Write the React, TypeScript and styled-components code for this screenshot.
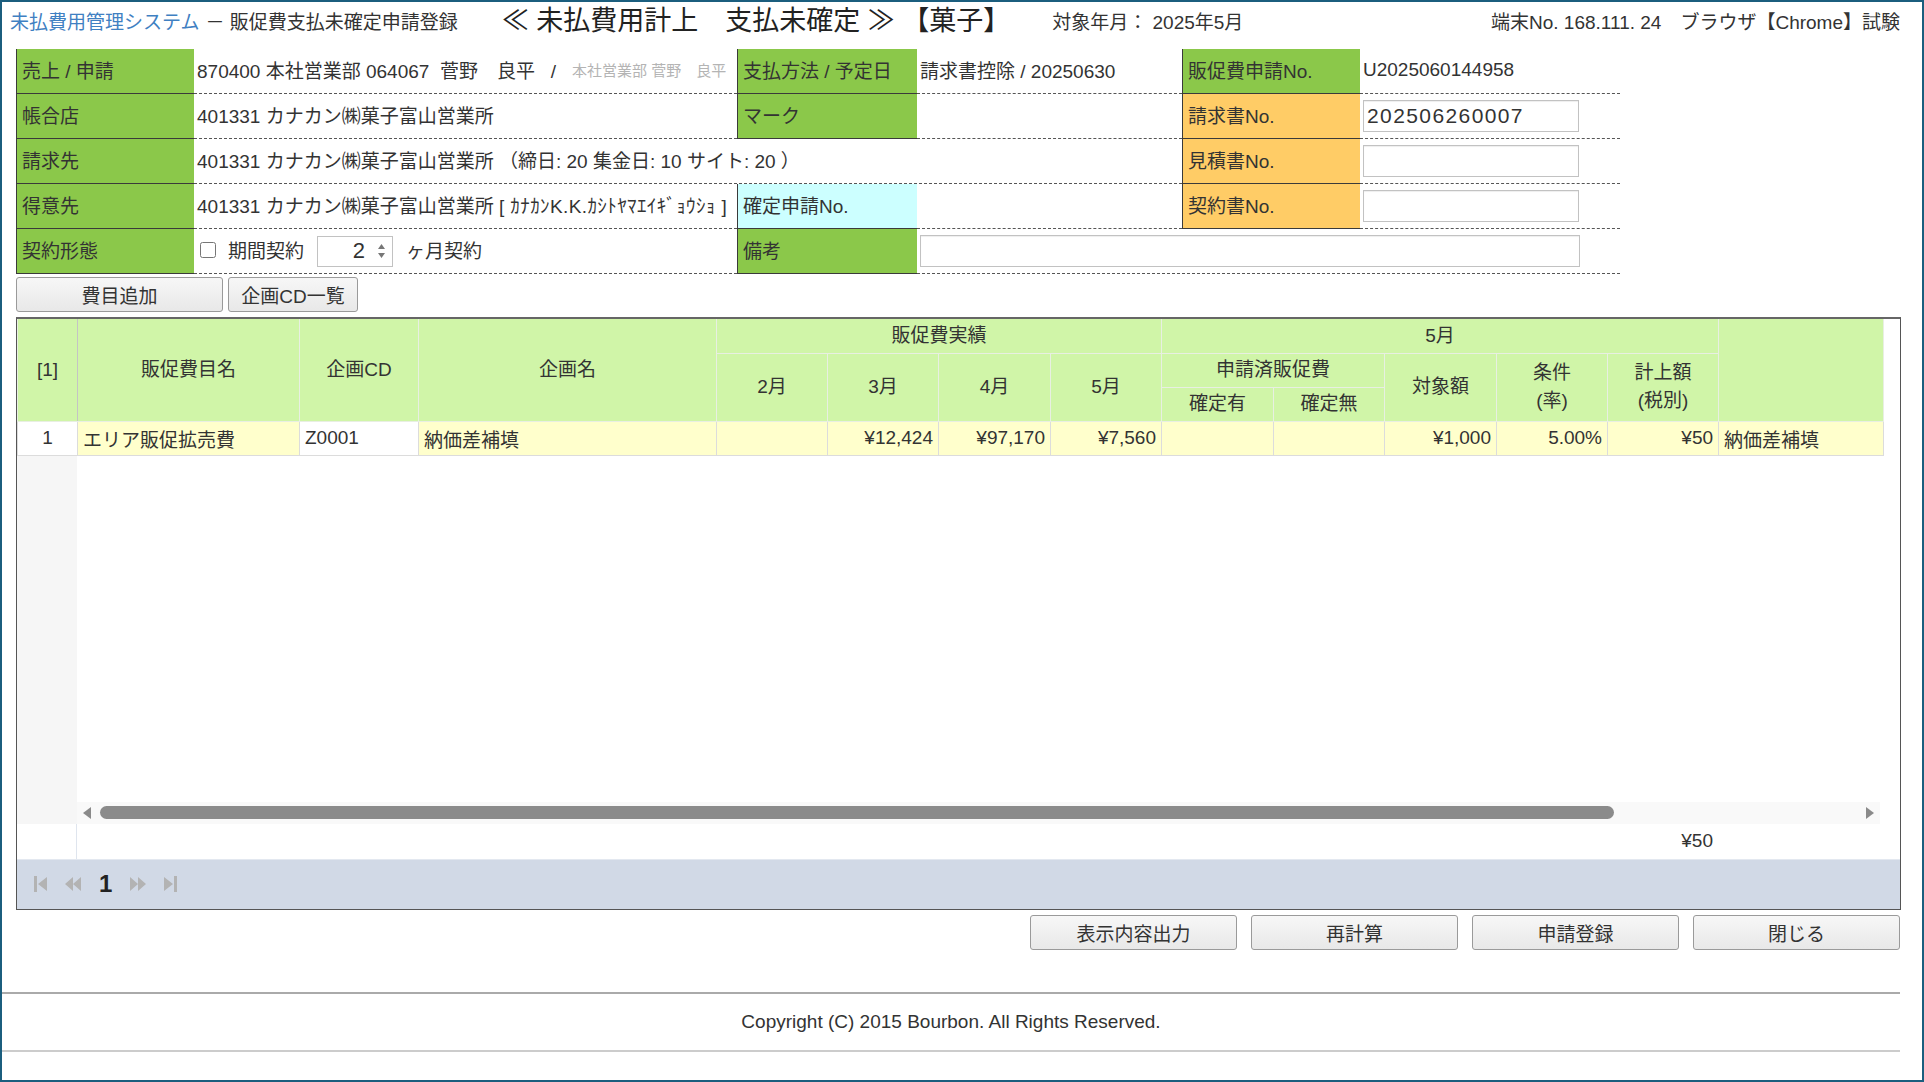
import styled, { createGlobalStyle } from 'styled-components';

const GlobalStyle = createGlobalStyle`
  html, body {
    margin: 0;
    padding: 0;
    background: #fff;
  }
  body {
    font-family: "Liberation Sans", "Noto Sans CJK JP", sans-serif;
    font-size: 19px;
    color: #333;
    overflow: hidden;
  }
  * {
    box-sizing: border-box;
  }
`;

const Frame = styled.div`
  width: 100vw;
  height: 100vh;
  border: 2px solid #1b5e7e;
  overflow: hidden;
`;

const Page = styled.div`
  width: 1898px;
  display: flex;
  flex-direction: column;
`;

const Header = styled.header`
  display: flex;
  align-items: center;
  height: 36px;
  padding-left: 8px;
  white-space: nowrap;
`;

const SystemName = styled.span`
  color: #3f80c2;
`;

const ScreenName = styled.span`
  margin-left: 6px;
`;

const Title = styled.span`
  margin-left: 44px;
  margin-top: -4px;
  font-size: 27px;
  color: #222;
`;

const TargetMonth = styled.span`
  margin-left: 42px;
`;

const Terminal = styled.span`
  margin-left: auto;
`;

const Content = styled.div`
  padding-left: 14px;
`;

const InfoGrid = styled.div`
  display: grid;
  grid-template-columns: 178px 543px 180px 265px 178px 260px;
  grid-auto-rows: 45px;
  width: 1604px;
  margin-top: 11px;
`;

const toneColors = {
  green: '#8bc84a',
  orange: '#ffcc66',
  cyan: '#ccffff',
};

const Label = styled.div<{ $tone: keyof typeof toneColors }>`
  display: flex;
  align-items: center;
  padding: 0 0 3px 5px;
  background: ${(p) => toneColors[p.$tone]};
  border-left: 1px solid #3a3a3a;
  border-bottom: 1px solid #3a3a3a;
  white-space: nowrap;
`;

const Value = styled.div<{ $span?: number }>`
  grid-column: span ${(p) => p.$span ?? 1};
  display: flex;
  align-items: center;
  padding: 0 0 3px 3px;
  border-bottom: 1px dashed #555;
  white-space: pre;
  overflow: hidden;
`;

const SubName = styled.span`
  margin-left: 16px;
  font-size: 15px;
  color: #b4b4b4;
`;

const Kana = styled.span`
  letter-spacing: 0.4px;
`;

const TextField = styled.input<{ $w: number }>`
  width: ${(p) => p.$w}px;
  height: 32px;
  margin-top: 3px;
  border: 1px solid #c2c2c2;
  box-shadow: inset 0 1px 1px rgba(0, 0, 0, 0.07);
  font-family: inherit;
  font-size: 21px;
  letter-spacing: 1.4px;
  color: #333;
  padding: 0 3px;
  background: #fff;
`;

const Check = styled.input`
  width: 16px;
  height: 16px;
  margin: 0 12px 0 3px;
`;

const SpinBox = styled.div`
  display: flex;
  align-items: center;
  justify-content: flex-end;
  gap: 12px;
  width: 76px;
  height: 31px;
  margin: 3px 13px 0;
  padding-right: 6px;
  border: 1px solid #c2c2c2;
  font-size: 22px;
`;

const ButtonRow = styled.div`
  display: flex;
  gap: 5px;
  margin-top: 3px;
`;

const Button = styled.button<{ $w: number }>`
  width: ${(p) => p.$w}px;
  height: 35px;
  padding: 0;
  border: 1px solid #9a9a9a;
  border-radius: 3px;
  background: linear-gradient(#f7f7f7, #e8e8e8);
  font: inherit;
  color: #333;
`;

const GridBox = styled.div`
  width: 1885px;
  margin-top: 5px;
  border: 1px solid #555;
  border-top: 2px solid #666;
`;

const Table = styled.table`
  table-layout: fixed;
  border-collapse: collapse;
  width: 1866px;
`;

const Th = styled.th<{ $sep?: boolean }>`
  height: 34px;
  padding: 0;
  background: #d0f5a8;
  border: 1px solid #e8efe2;
  border-top: none;
  ${(p) => (p.$sep ? 'border-right: 1px solid #c4c4c4;' : '')}
  font-weight: normal;
  text-align: center;
  vertical-align: middle;
  line-height: 28px;
  white-space: nowrap;
`;

const Td = styled.td<{ $tone?: 'yellow' | 'white'; $align?: 'left' | 'right' | 'center' }>`
  height: 34px;
  padding: 0 5px;
  background: ${(p) => (p.$tone === 'yellow' ? '#ffffcc' : '#fff')};
  border: 1px solid #dcdcdc;
  text-align: ${(p) => p.$align ?? 'left'};
  white-space: nowrap;
  overflow: hidden;
`;

const BodyArea = styled.div`
  display: flex;
  height: 368px;
`;

const Gutter = styled.div<{ $shade?: boolean }>`
  width: 60px;
  flex: none;
  background: ${(p) => (p.$shade ? '#f6f6f6' : '#fff')};
  border-right: 1px solid ${(p) => (p.$shade ? '#f6f6f6' : '#dfe5ee')};
`;

const BodyMain = styled.div`
  display: flex;
  flex-direction: column;
  width: 1806px;
`;

const Filler = styled.div`
  flex: 1;
`;

const ScrollTrack = styled.div`
  display: flex;
  align-items: center;
  height: 22px;
  width: 1803px;
  padding: 0 6px;
  background: #f9f9f9;
`;

const Thumb = styled.div<{ $w: number }>`
  width: ${(p) => p.$w}px;
  height: 13px;
  margin-left: 9px;
  border-radius: 7px;
  background: #8b8b8b;
`;

const TrackSpacer = styled.div`
  flex: 1;
`;

const TotalRow = styled.div`
  display: flex;
  height: 35px;
`;

const TotalAmount = styled.div`
  width: 1641px;
  padding-right: 5px;
  display: flex;
  align-items: center;
  justify-content: flex-end;
`;

const Pager = styled.div`
  display: flex;
  align-items: center;
  gap: 18px;
  height: 50px;
  padding-left: 17px;
  background: #d1d9e6;
  border-top: 1px solid #e3e8f0;
`;

const PageNo = styled.span`
  font-size: 24px;
  font-weight: bold;
  color: #222;
`;

const ActionBar = styled.div`
  display: flex;
  justify-content: flex-end;
  gap: 14px;
  width: 1884px;
  margin-top: 5px;
`;

const Footer = styled.footer`
  margin-top: 42px;
  height: 60px;
  display: flex;
  align-items: center;
  justify-content: center;
  border-top: 2px solid #aaa;
  border-bottom: 2px solid #ccc;
`;

const PagerIcon = ({ kind }: { kind: 'first' | 'prev' | 'next' | 'last' }) => {
  const paths = {
    first: 'M0 1h3v16H0z M13 2L4 9l9 7z',
    prev: 'M8 2L0 9l8 7z M16 2L8 9l8 7z',
    next: 'M0 2l8 7-8 7z M8 2l8 7-8 7z',
    last: 'M0 2l9 7-9 7z M10 1h3v16h-3z',
  };
  const w = kind === 'first' || kind === 'last' ? 13 : 16;
  return (
    <svg width={w} height={18} viewBox={`0 0 ${w} 18`}>
      <path d={paths[kind]} fill="#b3b3b3" />
    </svg>
  );
};

const Arrow = ({ dir }: { dir: 'left' | 'right' }) => (
  <svg width={8} height={12} viewBox="0 0 8 12">
    <path d={dir === 'left' ? 'M8 0L0 6l8 6z' : 'M0 0l8 6-8 6z'} fill="#8a8a8a" />
  </svg>
);

const SpinArrows = () => (
  <svg width={9} height={18} viewBox="0 0 9 18">
    <path d="M4.5 2L8 7H1z M1 11h7l-3.5 5z" fill="#777" />
  </svg>
);

const months = ['2月', '3月', '4月', '5月'];
const colWidths = [60, 222, 119, 298, 111, 111, 112, 111, 112, 111, 112, 111, 111, 165];

const row = {
  name: 'エリア販促拡売費',
  code: 'Z0001',
  plan: '納価差補填',
  results: ['', '¥12,424', '¥97,170', '¥7,560'],
  fixed: '',
  unfixed: '',
  target: '¥1,000',
  rate: '5.00%',
  amount: '¥50',
  note: '納価差補填',
};

const App = () => {
  return (
    <>
      <GlobalStyle />
      <Frame>
        <Page>
          <Header>
            <SystemName>未払費用管理システム</SystemName>
            <ScreenName>－ 販促費支払未確定申請登録</ScreenName>
            <Title>≪ 未払費用計上　支払未確定 ≫ 【菓子】</Title>
            <TargetMonth>対象年月： 2025年5月</TargetMonth>
            <Terminal>端末No. 168.111. 24　ブラウザ【Chrome】試験</Terminal>
          </Header>

          <Content>
            <InfoGrid>
              <Label $tone="green">売上 / 申請</Label>
              <Value>
                {'870400 本社営業部 064067  菅野　良平   /'}
                <SubName>本社営業部 菅野　良平</SubName>
              </Value>
              <Label $tone="green">支払方法 / 予定日</Label>
              <Value>請求書控除 / 20250630</Value>
              <Label $tone="green">販促費申請No.</Label>
              <Value>U2025060144958</Value>

              <Label $tone="green">帳合店</Label>
              <Value>401331 カナカン㈱菓子富山営業所</Value>
              <Label $tone="green">マーク</Label>
              <Value />
              <Label $tone="orange">請求書No.</Label>
              <Value>
                <TextField $w={216} defaultValue="202506260007" readOnly />
              </Value>

              <Label $tone="green">請求先</Label>
              <Value $span={3}>401331 カナカン㈱菓子富山営業所 （締日: 20 集金日: 10 サイト: 20 ）</Value>
              <Label $tone="orange">見積書No.</Label>
              <Value>
                <TextField $w={216} readOnly />
              </Value>

              <Label $tone="green">得意先</Label>
              <Value>
                401331 カナカン㈱菓子富山営業所 <Kana>[ ｶﾅｶﾝK.K.ｶｼﾄﾔﾏｴｲｷﾞｮｳｼｮ ]</Kana>
              </Value>
              <Label $tone="cyan">確定申請No.</Label>
              <Value />
              <Label $tone="orange">契約書No.</Label>
              <Value>
                <TextField $w={216} readOnly />
              </Value>

              <Label $tone="green">契約形態</Label>
              <Value>
                <Check type="checkbox" />
                期間契約
                <SpinBox>
                  2
                  <SpinArrows />
                </SpinBox>
                ヶ月契約
              </Value>
              <Label $tone="green">備考</Label>
              <Value $span={3}>
                <TextField $w={660} readOnly />
              </Value>
            </InfoGrid>

            <ButtonRow>
              <Button $w={207}>費目追加</Button>
              <Button $w={130}>企画CD一覧</Button>
            </ButtonRow>

            <GridBox>
              <Table>
                <colgroup>
                  {colWidths.map((w, i) => (
                    <col key={i} style={{ width: w }} />
                  ))}
                </colgroup>
                <thead>
                  <tr>
                    <Th rowSpan={3} $sep>[1]</Th>
                    <Th rowSpan={3}>販促費目名</Th>
                    <Th rowSpan={3}>企画CD</Th>
                    <Th rowSpan={3}>企画名</Th>
                    <Th colSpan={4}>販促費実績</Th>
                    <Th colSpan={5}>5月</Th>
                    <Th rowSpan={3} />
                  </tr>
                  <tr>
                    {months.map((m) => (
                      <Th key={m} rowSpan={2}>
                        {m}
                      </Th>
                    ))}
                    <Th colSpan={2}>申請済販促費</Th>
                    <Th rowSpan={2}>対象額</Th>
                    <Th rowSpan={2}>
                      条件
                      <br />
                      (率)
                    </Th>
                    <Th rowSpan={2}>
                      計上額
                      <br />
                      (税別)
                    </Th>
                  </tr>
                  <tr>
                    <Th>確定有</Th>
                    <Th>確定無</Th>
                  </tr>
                </thead>
                <tbody>
                  <tr>
                    <Td $align="center">1</Td>
                    <Td $tone="yellow">{row.name}</Td>
                    <Td>{row.code}</Td>
                    <Td $tone="yellow">{row.plan}</Td>
                    {row.results.map((v, i) => (
                      <Td key={i} $tone="yellow" $align="right">
                        {v}
                      </Td>
                    ))}
                    <Td $tone="yellow" $align="right">{row.fixed}</Td>
                    <Td $tone="yellow" $align="right">{row.unfixed}</Td>
                    <Td $tone="yellow" $align="right">{row.target}</Td>
                    <Td $tone="yellow" $align="right">{row.rate}</Td>
                    <Td $tone="yellow" $align="right">{row.amount}</Td>
                    <Td $tone="yellow">{row.note}</Td>
                  </tr>
                </tbody>
              </Table>

              <BodyArea>
                <Gutter $shade />
                <BodyMain>
                  <Filler />
                  <ScrollTrack>
                    <Arrow dir="left" />
                    <Thumb $w={1514} />
                    <TrackSpacer />
                    <Arrow dir="right" />
                  </ScrollTrack>
                </BodyMain>
              </BodyArea>

              <TotalRow>
                <Gutter />
                <TotalAmount>¥50</TotalAmount>
              </TotalRow>

              <Pager>
                <PagerIcon kind="first" />
                <PagerIcon kind="prev" />
                <PageNo>1</PageNo>
                <PagerIcon kind="next" />
                <PagerIcon kind="last" />
              </Pager>
            </GridBox>

            <ActionBar>
              <Button $w={207}>表示内容出力</Button>
              <Button $w={207}>再計算</Button>
              <Button $w={207}>申請登録</Button>
              <Button $w={207}>閉じる</Button>
            </ActionBar>
          </Content>

          <Footer>Copyright (C) 2015 Bourbon. All Rights Reserved.</Footer>
        </Page>
      </Frame>
    </>
  );
};

export default App;
